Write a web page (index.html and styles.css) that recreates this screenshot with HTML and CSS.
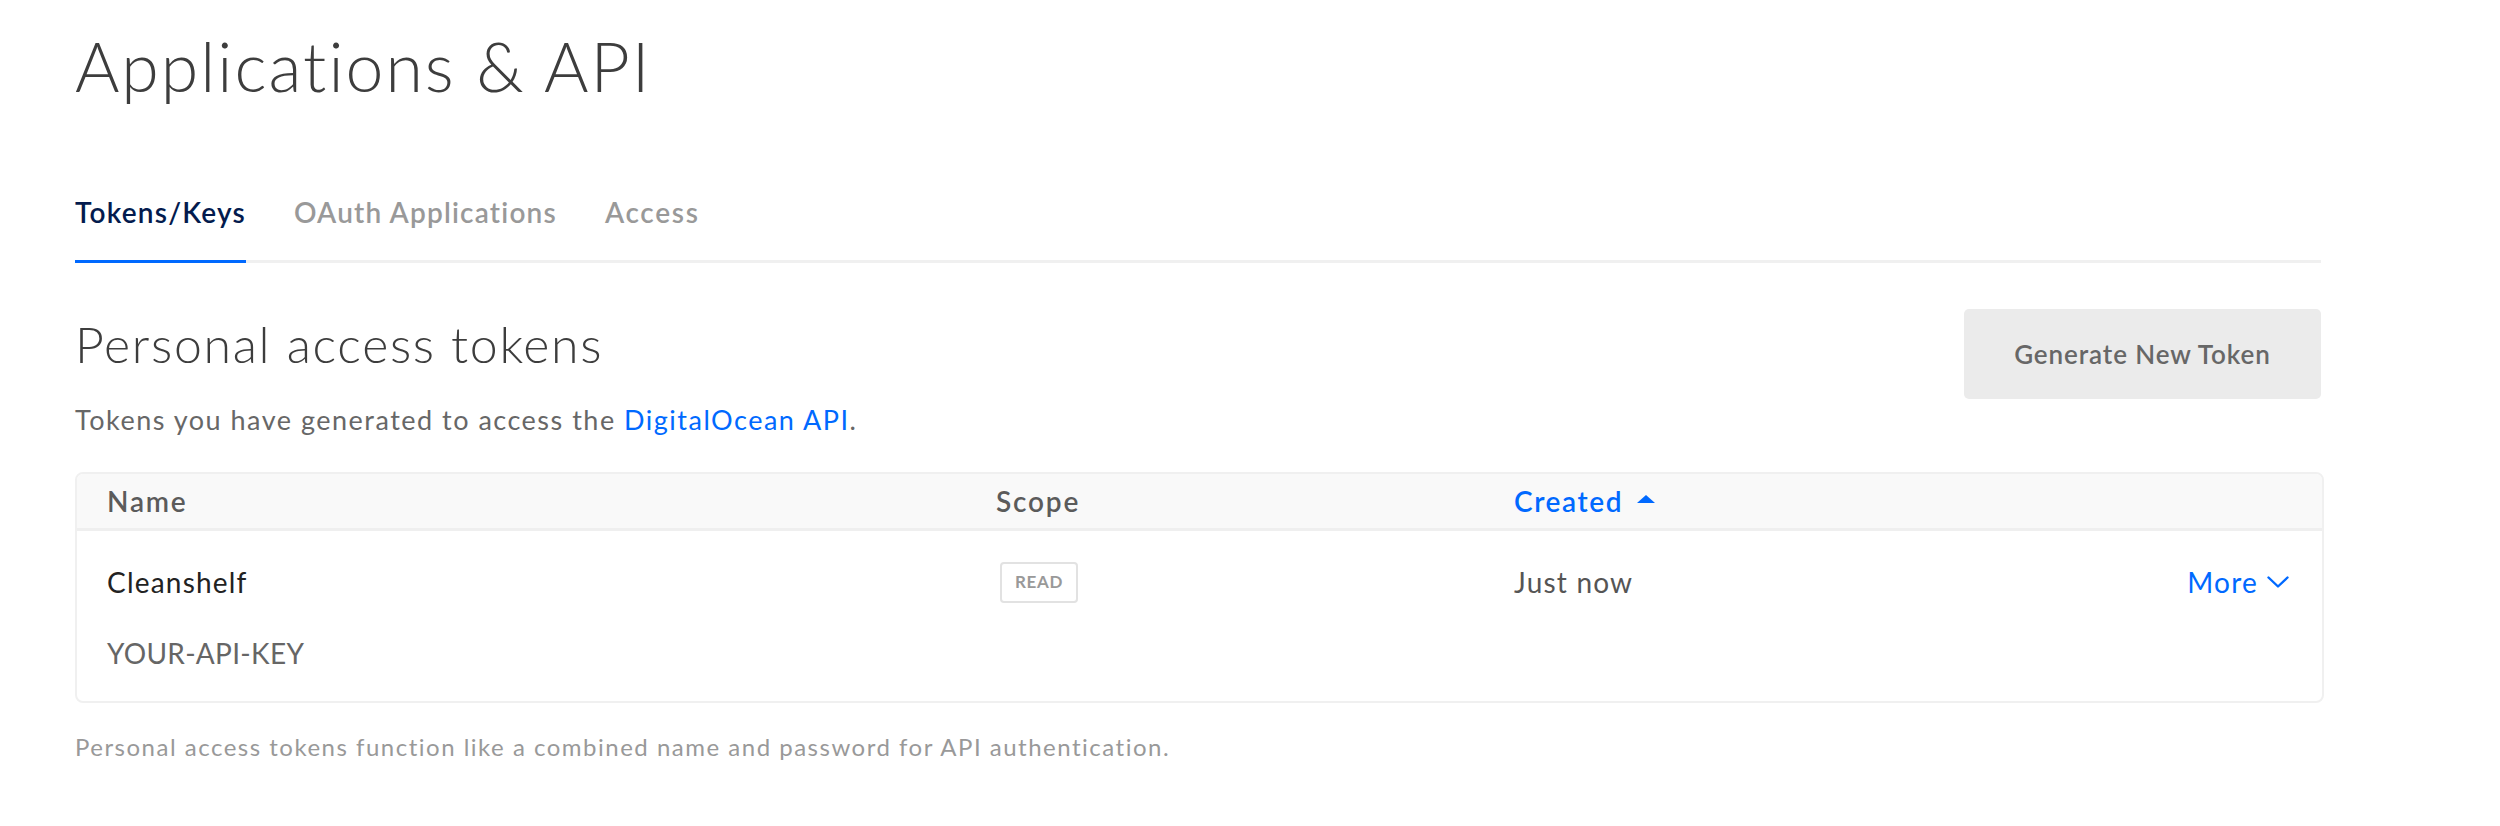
FILE: index.html
```html
<!DOCTYPE html>
<html lang="en">
<head>
<meta charset="utf-8">
<title>Applications &amp; API</title>
<link rel="stylesheet" href="styles.css">
</head>
<body>
<div class="page">
  <h1 class="page-title">Applications &amp; API</h1>

  <nav class="tabs">
    <a class="tab tab-active">Tokens/Keys</a>
    <a class="tab">OAuth Applications</a>
    <a class="tab">Access</a>
  </nav>

  <section class="section">
    <div class="section-head">
      <div class="section-intro">
        <h2 class="section-title">Personal access tokens</h2>
        <p class="section-desc">Tokens you have generated to access the <a class="link">DigitalOcean API</a>.</p>
      </div>
      <button class="btn">Generate New Token</button>
    </div>

    <div class="card">
      <div class="table-head">
        <div class="th">Name</div>
        <div class="th">Scope</div>
        <div class="th th-sorted">Created
          <svg class="sort-icon" width="18" height="8" viewBox="0 0 18 8"><path d="M9 0 L18 8 L0 8 Z" fill="#0069ff"/></svg>
        </div>
        <div class="th"></div>
      </div>
      <div class="table-row">
        <div class="cell cell-name">
          <div class="token-name">Cleanshelf</div>
          <div class="token-key">YOUR-API-KEY</div>
        </div>
        <div class="cell"><span class="badge">READ</span></div>
        <div class="cell cell-date">Just now</div>
        <div class="cell cell-actions">
          <a class="more">More
            <svg class="chev" width="22" height="12" viewBox="0 0 22 12"><path d="M1.5 1.5 L11 10.5 L20.5 1.5" fill="none" stroke="#0069ff" stroke-width="2.4" stroke-linecap="round" stroke-linejoin="round"/></svg>
          </a>
        </div>
      </div>
    </div>

    <p class="footnote">Personal access tokens function like a combined name and password for API authentication.</p>
  </section>
</div>
</body>
</html>
```

FILE: styles.css
```css
* { box-sizing: border-box; }

html, body {
  margin: 0;
  padding: 0;
  background: #ffffff;
}

body {
  font-family: "Lato", "Open Sans", sans-serif;
  color: #444444;
}

.page {
  padding-left: 75px;
  width: 2324px;
}

.page-title {
  margin: 26px 0 0 0;
  font-size: 68px;
  line-height: 80px;
  font-weight: 300;
  color: #3d3d3d;
  letter-spacing: 2px;
}

.tabs {
  display: flex;
  gap: 48px;
  margin-top: 86px;
  border-bottom: 3px solid #f0f0f0;
  width: 2246px;
}

.tab {
  font-size: 28px;
  line-height: 40px;
  font-weight: 600;
  color: #999999;
  letter-spacing: 1.2px;
  padding-bottom: 28px;
  border-bottom: 3px solid transparent;
  margin-bottom: -3px;
}

.tab:last-child {
  letter-spacing: 1.7px;
}

.tab-active {
  color: #031b4e;
  border-bottom-color: #0069ff;
}

.section {
  margin-top: 46px;
}

.section-head {
  display: flex;
  justify-content: space-between;
  align-items: flex-start;
  width: 2246px;
}

.section-title {
  margin: 5px 0 0 0;
  font-size: 50px;
  line-height: 60px;
  font-weight: 300;
  color: #3d3d3d;
  letter-spacing: 1.7px;
}

.section-desc {
  margin: 28px 0 0 0;
  font-size: 27px;
  line-height: 36px;
  color: #676767;
  letter-spacing: 1.5px;
}

.link {
  color: #0069ff;
}

.btn {
  width: 357px;
  height: 90px;
  border: none;
  border-radius: 5px;
  background: #ebebeb;
  color: #676767;
  font-family: "Lato", "Open Sans", sans-serif;
  font-size: 26px;
  font-weight: 600;
  letter-spacing: 0.9px;
  padding: 0;
}

.card {
  margin-top: 34px;
  width: 2249px;
  border: 2px solid #f0f0f0;
  border-radius: 8px;
  overflow: hidden;
}

.table-head,
.table-row {
  display: grid;
  grid-template-columns: 889px 518px 1fr auto;
  padding: 0 33px 0 30px;
}

.table-head {
  height: 57px;
  align-items: center;
  background: #f9f9f9;
  border-bottom: 3px solid #efefef;
}

.th {
  font-size: 28px;
  line-height: 40px;
  font-weight: 600;
  color: #5b5b5b;
  letter-spacing: 1.8px;
}

.th-sorted {
  color: #0069ff;
  display: flex;
  align-items: center;
  gap: 14px;
  letter-spacing: 1.6px;
}

.sort-icon {
  margin-top: -4px;
}

.table-row {
  padding-top: 31px;
  padding-bottom: 28px;
  align-items: start;
}

.cell {
  font-size: 28px;
  line-height: 40px;
  color: #555555;
  letter-spacing: 1.2px;
  height: 40px;
  display: flex;
  align-items: center;
}

.cell-name {
  display: block;
  height: auto;
}

.token-name {
  color: #222222;
}

.token-key {
  margin-top: 31px;
  color: #666666;
  letter-spacing: 0.3px;
}

.badge {
  display: inline-flex;
  align-items: center;
  justify-content: center;
  margin-left: 4px;
  width: 78px;
  height: 41px;
  border: 2px solid #e2e2e2;
  border-radius: 4px;
  font-size: 17px;
  font-weight: 700;
  color: #999999;
  letter-spacing: 0.6px;
}

.cell-actions {
  justify-content: flex-end;
}

.more {
  color: #0069ff;
  display: flex;
  align-items: center;
  gap: 9px;
}

.footnote {
  margin: 27px 0 0 0;
  font-size: 24px;
  line-height: 34px;
  color: #999999;
  letter-spacing: 1.5px;
}
```
